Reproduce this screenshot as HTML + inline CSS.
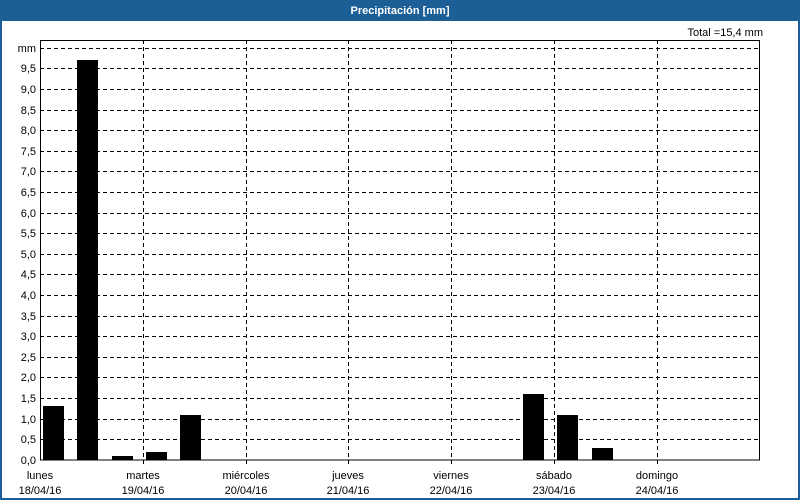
<!DOCTYPE html>
<html><head><meta charset="utf-8"><style>
html,body{margin:0;padding:0;width:800px;height:500px;overflow:hidden;background:#fff}
</style></head><body>
<svg width="800" height="500" xmlns="http://www.w3.org/2000/svg" font-family="Liberation Sans, DejaVu Sans, sans-serif" font-size="11">
<rect x="0" y="0" width="800" height="500" fill="#1c5f96"/>
<rect x="2" y="21" width="796" height="477" fill="#fff"/>
<text x="400" y="14" fill="#fff" font-weight="bold" text-anchor="middle">Precipitación [mm]</text>
<text x="763" y="36" text-anchor="end" fill="#000">Total =15,4 mm</text>
<g stroke="#000" stroke-width="1" stroke-dasharray="4,3" shape-rendering="crispEdges">
<line x1="40" y1="48.5" x2="760" y2="48.5"/>
<line x1="40" y1="68.5" x2="760" y2="68.5"/>
<line x1="40" y1="89.5" x2="760" y2="89.5"/>
<line x1="40" y1="110.5" x2="760" y2="110.5"/>
<line x1="40" y1="130.5" x2="760" y2="130.5"/>
<line x1="40" y1="151.5" x2="760" y2="151.5"/>
<line x1="40" y1="171.5" x2="760" y2="171.5"/>
<line x1="40" y1="192.5" x2="760" y2="192.5"/>
<line x1="40" y1="213.5" x2="760" y2="213.5"/>
<line x1="40" y1="233.5" x2="760" y2="233.5"/>
<line x1="40" y1="254.5" x2="760" y2="254.5"/>
<line x1="40" y1="274.5" x2="760" y2="274.5"/>
<line x1="40" y1="295.5" x2="760" y2="295.5"/>
<line x1="40" y1="316.5" x2="760" y2="316.5"/>
<line x1="40" y1="336.5" x2="760" y2="336.5"/>
<line x1="40" y1="357.5" x2="760" y2="357.5"/>
<line x1="40" y1="377.5" x2="760" y2="377.5"/>
<line x1="40" y1="398.5" x2="760" y2="398.5"/>
<line x1="40" y1="419.5" x2="760" y2="419.5"/>
<line x1="40" y1="439.5" x2="760" y2="439.5"/>
<line x1="143.5" y1="40" x2="143.5" y2="466"/>
<line x1="246.5" y1="40" x2="246.5" y2="466"/>
<line x1="348.5" y1="40" x2="348.5" y2="466"/>
<line x1="451.5" y1="40" x2="451.5" y2="466"/>
<line x1="554.5" y1="40" x2="554.5" y2="466"/>
<line x1="657.5" y1="40" x2="657.5" y2="466"/>
</g>
<g fill="#000">
<rect x="43" y="406" width="21" height="54"/>
<rect x="77" y="60" width="21" height="400"/>
<rect x="112" y="456" width="21" height="4"/>
<rect x="146" y="452" width="21" height="8"/>
<rect x="180" y="415" width="21" height="45"/>
<rect x="523" y="394" width="21" height="66"/>
<rect x="557" y="415" width="21" height="45"/>
<rect x="592" y="448" width="21" height="12"/>
</g>
<rect x="40.5" y="40.5" width="719" height="419.5" fill="none" stroke="#000" stroke-width="1.2" shape-rendering="crispEdges"/>
<g text-anchor="end" fill="#000">
<text x="36" y="52">mm</text>
<text x="36" y="72">9,5</text><text x="36" y="93">9,0</text><text x="36" y="114">8,5</text>
<text x="36" y="134">8,0</text><text x="36" y="155">7,5</text><text x="36" y="175">7,0</text>
<text x="36" y="196">6,5</text><text x="36" y="217">6,0</text><text x="36" y="237">5,5</text>
<text x="36" y="258">5,0</text><text x="36" y="278">4,5</text><text x="36" y="299">4,0</text>
<text x="36" y="320">3,5</text><text x="36" y="340">3,0</text><text x="36" y="361">2,5</text>
<text x="36" y="381">2,0</text><text x="36" y="402">1,5</text><text x="36" y="423">1,0</text>
<text x="36" y="443">0,5</text><text x="36" y="464">0,0</text>
</g>
<g text-anchor="middle" fill="#000">
<text x="40" y="479">lunes</text><text x="40" y="494">18/04/16</text>
<text x="143" y="479">martes</text><text x="143" y="494">19/04/16</text>
<text x="246" y="479">miércoles</text><text x="246" y="494">20/04/16</text>
<text x="348" y="479">jueves</text><text x="348" y="494">21/04/16</text>
<text x="451" y="479">viernes</text><text x="451" y="494">22/04/16</text>
<text x="554" y="479">sábado</text><text x="554" y="494">23/04/16</text>
<text x="657" y="479">domingo</text><text x="657" y="494">24/04/16</text>
</g>
</svg>
</body></html>
